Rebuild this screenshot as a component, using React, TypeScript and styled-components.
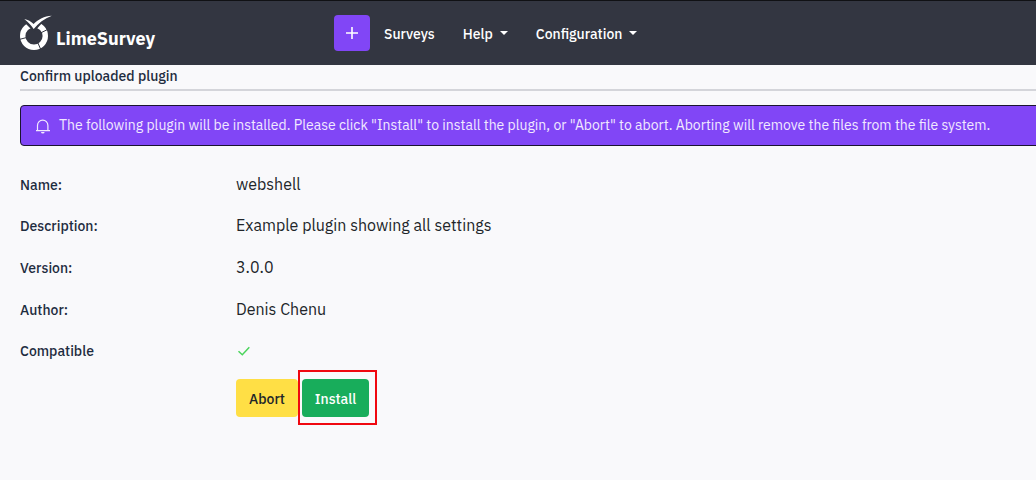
import React from "react";
import styled, { createGlobalStyle } from "styled-components";

const GlobalStyle = createGlobalStyle`
  * { box-sizing: border-box; }
  body {
    margin: 0;
    background: #f9f9fb;
    color: #212529;
    font-family: "IBM Plex Sans", Roboto, "Noto Sans", sans-serif;
    font-size: 16px;
    line-height: 24px;
    overflow-x: hidden;
  }
`;

const Header = styled.header`
  display: flex;
  align-items: center;
  height: 65px;
  padding: 0 20px;
  background: #333641;
  border-top: 1px solid #101114;
`;

const Brand = styled.a`
  display: flex;
  align-items: center;
  gap: 4px;
  width: 314px;
  color: #fff;
  font-size: 18px;
  font-weight: 700;
  text-decoration: none;

  span { padding-top: 12px; }
`;

const Nav = styled.nav`
  display: flex;
  align-items: center;
`;

const CreateButton = styled.button`
  display: flex;
  align-items: center;
  justify-content: center;
  width: 36px;
  height: 36px;
  margin-right: 14px;
  padding: 0;
  border: 0;
  border-radius: 4px;
  background: #8146f6;
  color: #fff;
`;

const NavLink = styled.a`
  display: flex;
  align-items: center;
  gap: 7px;
  margin-right: 28px;
  padding-top: 2px;
  color: #fff;
  font-size: 14px;
  font-weight: 500;
  text-decoration: none;
`;

const Caret = styled.i`
  margin-bottom: 2px;
  border: 4px solid transparent;
  border-top-color: #fff;
  border-bottom: 0;
`;

const Main = styled.main`
  padding-left: 20px;
`;

const Title = styled.h1`
  margin: 0 0 14px;
  height: 26px;
  border-bottom: 2px solid #d4d5da;
  color: #1e2c3f;
  font-size: 14px;
  font-weight: 500;
  line-height: 22px;
`;

const Alert = styled.div`
  display: flex;
  align-items: center;
  gap: 8px;
  height: 41px;
  margin-right: -12px;
  padding: 0 14px;
  border: 1px solid #1b1431;
  border-radius: 4px;
  background: #8146f6;
  color: #f1e9ff;
  font-size: 14px;
  white-space: nowrap;

  span { padding-bottom: 2px; }
`;

const Details = styled.dl`
  display: grid;
  grid-auto-rows: 1fr;
  height: 208px;
  margin: 17px 0 0;
`;

const Detail = styled.div`
  display: flex;
  align-items: center;
`;

const Term = styled.dt`
  width: 216px;
  padding-top: 2px;
  color: #1e2c3f;
  font-size: 14px;
  font-weight: 500;
`;

const Value = styled.dd`
  display: flex;
  margin: 0;
`;

const Actions = styled.div`
  display: flex;
  align-items: center;
  margin: -1px 0 0 216px;
`;

const Highlight = styled.div`
  padding: 7px 6px 6px 2px;
  border: 2px solid #f00810;
`;

const ActionButton = styled.button<{ $tone: "warn" | "success" }>`
  display: block;
  width: ${({ $tone }) => ($tone === "warn" ? 62 : 67)}px;
  height: 38px;
  padding: 2px 0 0;
  border: 0;
  border-radius: 4px;
  background: ${({ $tone }) => ($tone === "warn" ? "#ffdf45" : "#18ad5b")};
  color: ${({ $tone }) => ($tone === "warn" ? "#212529" : "#fff")};
  font: 500 14px/24px "IBM Plex Sans", Roboto, "Noto Sans", sans-serif;
`;

const Logo = () => (
  <svg width="32" height="36" viewBox="0 0 32 36" aria-hidden="true">
    <circle cx="14" cy="21" r="11.3" fill="none" stroke="#fff" strokeWidth="5.4" />
    <path
      d="M6 22.700-1 24.500M17.500 27l3.500 8M20.500 18l7-3.500"
      stroke="#333641"
      strokeWidth="1"
    />
    <path d="M2 5 14 17 23 7V0H2z" fill="#333641" />
    <path d="M4.300 4c3.600.7 6.600 2.200 9.300 5C18.500 4.200 24 1.200 31.800.7 24.200 3.600 18.300 8.200 13.700 14.100 11.500 10.700 8.400 7.300 4.300 4z" fill="#fff" />
  </svg>
);

const Bell = () => (
  <svg width="16" height="16" viewBox="0 0 16 16" fill="none" aria-hidden="true">
    <path d="M1 12.700h14M2.500 12.500V7.500a5.200 5.400 0 0 1 10.400 0V12.500" stroke="#f1e9ff" strokeWidth="1.200" />
    <path d="M6 14h3.600a1.800 1.600 0 0 1-3.600 0z" fill="#f1e9ff" />
  </svg>
);

const Check = () => (
  <svg width="16" height="16" viewBox="0 0 16 16" role="img" aria-label="Yes">
    <path d="M2.500 9.200 6.300 12.800 13.300 5.200" fill="none" stroke="#4bd45c" strokeWidth="1.500" />
  </svg>
);

const details: [string, React.ReactNode][] = [
  ["Name:", "webshell"],
  ["Description:", "Example plugin showing all settings"],
  ["Version:", "3.0.0"],
  ["Author:", "Denis Chenu"],
  ["Compatible", <Check key="check" />],
];

export default function App() {
  return (
    <>
      <GlobalStyle />
      <Header>
        <Brand href="#">
          <Logo />
          <span>LimeSurvey</span>
        </Brand>
        <Nav>
          <CreateButton type="button" aria-label="Create">
            <svg width="14" height="14" viewBox="0 0 14 14" aria-hidden="true">
              <path d="M7 1v12M1 7h12" stroke="#fff" strokeWidth="1.600" />
            </svg>
          </CreateButton>
          <NavLink href="#">Surveys</NavLink>
          <NavLink href="#">Help<Caret /></NavLink>
          <NavLink href="#">Configuration<Caret /></NavLink>
        </Nav>
      </Header>
      <Main>
        <Title>Confirm uploaded plugin</Title>
        <Alert role="alert">
          <Bell />
          <span>
            The following plugin will be installed. Please click "Install" to install the plugin, or
            "Abort" to abort. Aborting will remove the files from the file system.
          </span>
        </Alert>
        <Details>
          {details.map(([term, value]) => (
            <Detail key={term}>
              <Term>{term}</Term>
              <Value>{value}</Value>
            </Detail>
          ))}
        </Details>
        <Actions>
          <ActionButton type="button" $tone="warn">Abort</ActionButton>
          <Highlight>
            <ActionButton type="button" $tone="success">Install</ActionButton>
          </Highlight>
        </Actions>
      </Main>
    </>
  );
}
